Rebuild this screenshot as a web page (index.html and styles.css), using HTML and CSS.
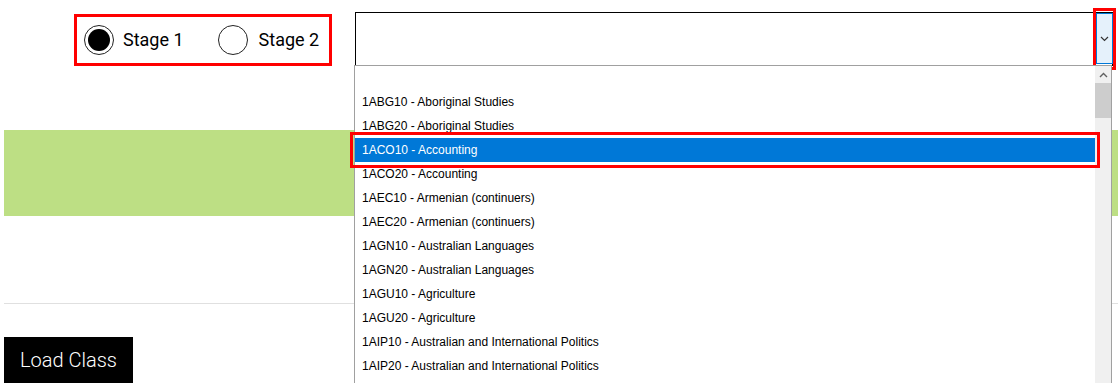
FILE: index.html
```html
<!DOCTYPE html>
<html>
<head>
<meta charset="utf-8">
<link rel="stylesheet" href="styles.css">
</head>
<body>
<div class="page">
  <div class="top-row">
    <div class="stage-group">
      <label class="stage"><span class="radio checked"></span><span class="stage-label">Stage 1</span></label>
      <label class="stage"><span class="radio"></span><span class="stage-label">Stage 2</span></label>
    </div>
    <div class="select">
      <div class="select-value"></div>
      <div class="select-btn">
        <svg width="9" height="6" viewBox="0 0 9 6"><path d="M1 1 L4.5 4.5 L8 1" fill="none" stroke="#333" stroke-width="1.2"/></svg>
        <span class="mark mark-btn"></span>
      </div>
      <div class="dropdown">
        <ul class="options">
          <li class="opt empty"></li>
          <li class="opt">1ABG10 - Aboriginal Studies</li>
          <li class="opt">1ABG20 - Aboriginal Studies</li>
          <li class="opt selected">1ACO10 - Accounting<span class="mark mark-opt"></span></li>
          <li class="opt">1ACO20 - Accounting</li>
          <li class="opt">1AEC10 - Armenian (continuers)</li>
          <li class="opt">1AEC20 - Armenian (continuers)</li>
          <li class="opt">1AGN10 - Australian Languages</li>
          <li class="opt">1AGN20 - Australian Languages</li>
          <li class="opt">1AGU10 - Agriculture</li>
          <li class="opt">1AGU20 - Agriculture</li>
          <li class="opt">1AIP10 - Australian and International Politics</li>
          <li class="opt">1AIP20 - Australian and International Politics</li>
          <li class="opt">1ALC10 - Albanian (continuers)</li>
        </ul>
        <div class="scrollbar">
          <div class="sb-arrow">
            <svg width="9" height="6" viewBox="0 0 9 6"><path d="M1 5 L4.5 1.5 L8 5" fill="none" stroke="#606060" stroke-width="1.4"/></svg>
          </div>
          <div class="sb-thumb"></div>
        </div>
      </div>
    </div>
  </div>
  <div class="band"></div>
  <div class="divider"></div>
  <button class="load-btn">Load Class</button>
</div>
</body>
</html>
```

FILE: styles.css
```css
html, body {
  margin: 0;
  padding: 0;
  background: #fff;
  overflow: hidden;
}
.page {
  padding-left: 4px;
  font-family: Roboto, "Liberation Sans", sans-serif;
  color: #000;
}
.top-row {
  display: flex;
  align-items: flex-start;
}
.stage-group {
  margin-left: 70px;
  margin-top: 14px;
  width: 258px;
  height: 52px;
  box-sizing: border-box;
  border: 3px solid #ff0000;
  display: flex;
  align-items: center;
  padding-left: 7px;
}
.stage {
  display: flex;
  align-items: center;
}
.stage + .stage {
  margin-left: 34px;
}
.stage + .stage .stage-label {
  margin-left: 11px;
}
.radio {
  width: 30px;
  height: 30px;
  box-sizing: border-box;
  border: 1.5px solid #222;
  border-radius: 50%;
  display: flex;
  align-items: center;
  justify-content: center;
  background: #fff;
}
.radio.checked::after {
  content: "";
  width: 22px;
  height: 22px;
  border-radius: 50%;
  background: #000;
}
.stage-label {
  font-size: 18px;
  margin-left: 9px;
  line-height: 20px;
}
.select {
  position: relative;
  margin-top: 12px;
  margin-left: 23px;
  margin-right: 5px;
  flex: 1;
  height: 54px;
  box-sizing: border-box;
  border: 1px solid #000;
  border-bottom: none;
  display: flex;
}
.select-value {
  flex: 1;
}
.select-btn {
  position: relative;
  width: 17px;
  height: 51px;
  box-sizing: border-box;
  border: 1px solid #0078d7;
  background: #e5f1fb;
  display: flex;
  align-items: center;
  justify-content: center;
  margin-right: -1px;
}
.mark {
  position: absolute;
  border: 3px solid #ff0000;
  pointer-events: none;
}
.mark-btn {
  left: -4px;
  right: -4px;
  top: -6px;
  bottom: -7px;
}
.dropdown {
  position: absolute;
  left: -2px;
  top: 52px;
  right: 0;
  height: 340px;
  border: 1px solid #a0a0a0;
  border-bottom: none;
  background: #fff;
  display: flex;
}
.options {
  list-style: none;
  margin: 0;
  padding: 0;
  flex: 1;
  font-family: "Liberation Sans", Arial, sans-serif;
  font-size: 12px;
}
.opt {
  position: relative;
  height: 24px;
  box-sizing: border-box;
  padding-top: 1px;
  line-height: 23px;
  padding-left: 7px;
  color: #000;
  white-space: nowrap;
}
.opt.selected {
  background: #0078d7;
  color: #fff;
}
.mark-opt {
  left: -5px;
  right: -5px;
  top: -6px;
  bottom: -6px;
}
.scrollbar {
  width: 16px;
  background: #f0f0f0;
  display: flex;
  flex-direction: column;
  align-items: center;
}
.sb-arrow {
  height: 17px;
  width: 16px;
  display: flex;
  align-items: center;
  justify-content: center;
}
.sb-thumb {
  width: 16px;
  height: 35px;
  background: #cdcdcd;
}
.band {
  margin-top: 64px;
  height: 86px;
  background: #bddf84;
}
.divider {
  margin-top: 87px;
  height: 1px;
  background: #e0e0e0;
}
.load-btn {
  display: block;
  margin-top: 33px;
  height: 46px;
  padding: 0 16px;
  border: none;
  background: #000;
  color: #fff;
  font-family: Roboto, "Liberation Sans", sans-serif;
  font-weight: 300;
  font-size: 20px;
  border-radius: 0;
}
```
